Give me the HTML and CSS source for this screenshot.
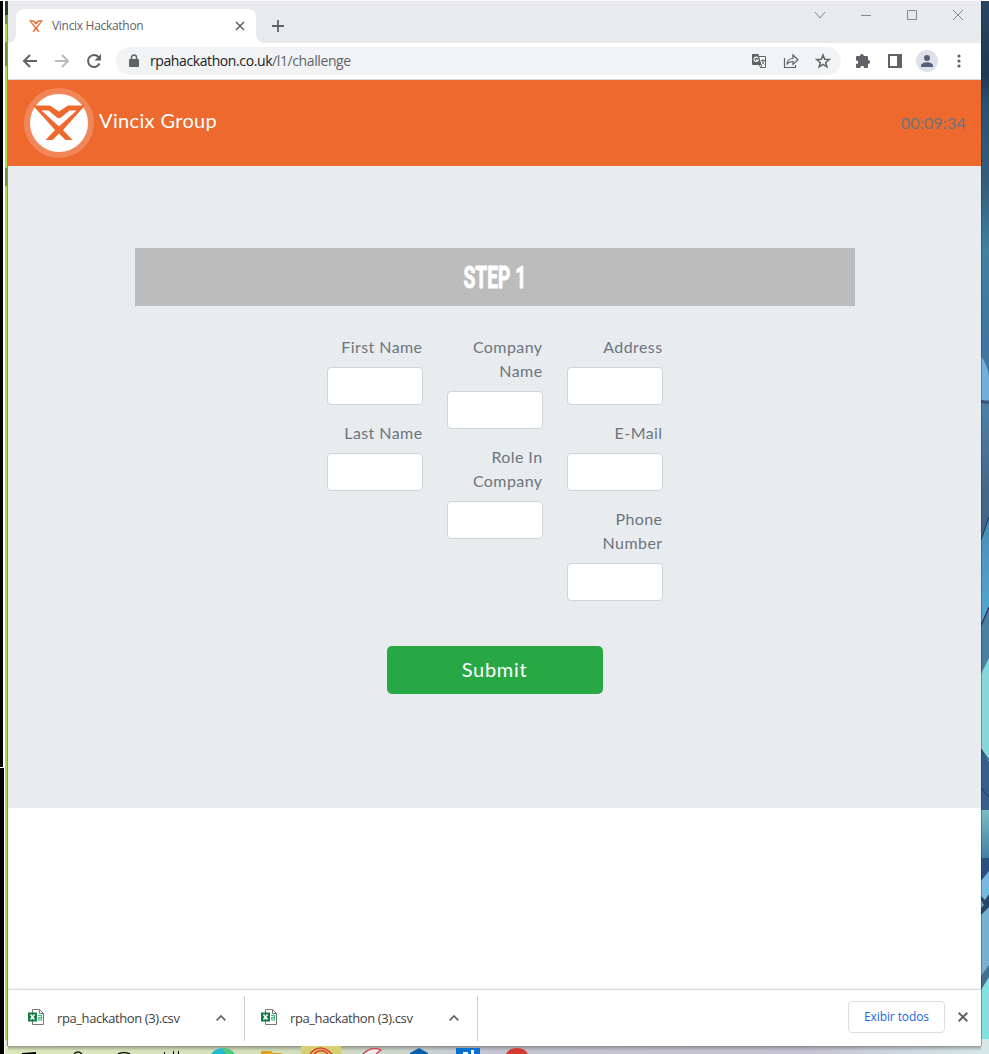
FILE: index.html
```html
<!DOCTYPE html>
<html lang="en">
<head>
<meta charset="utf-8">
<title>Vincix Hackathon</title>
<link rel="stylesheet" href="styles.css">
</head>
<body>
<svg width="0" height="0" class="defs">
  <defs>
    <symbol id="vincix" viewBox="0 0 52 36">
      <path d="M0 .5H17L26 6.500 35 .5H52L30 25 39.500 35H32.500L26 28.500 19.500 35H12.500L22 25Z" class="mark"/>
      <path d="M8.500 5.500H15.500L24 12.500Q26 14 28 12.500L36.500 5.500H43.500L26 21.500Z" class="cut"/>
    </symbol>
    <symbol id="csv" viewBox="0 0 16 16">
      <path d="M4.500.5h7l4 4v11h-11z" fill="#fff" stroke="#777"/>
      <path d="M11.500.5v4h4" fill="none" stroke="#777"/>
      <path d="M0 3.500h9v9H0z" fill="#107c41"/>
      <path d="M2.500 5.500l4 5M6.500 5.500l-4 5" stroke="#fff" stroke-width="1.500"/>
      <path d="M10 6.500h3.500V11H10.800V8.600h2.500" fill="none" stroke="#33c481" stroke-width="1.200"/>
    </symbol>
  </defs>
</svg>
<div class="desktop">
  <svg class="edge" width="8" height="1046" viewBox="0 0 8 1046">
    <path fill="#fff" d="M0 0h8v1046H0z"/>
    <path d="M0 1h3v766H0zM0 768h4v278H0z"/>
    <path fill="#abd94c" d="M5 1h3v1039H5z"/>
    <path fill="#273c25" d="M5 1h3v14H5z"/>
    <path fill="#6f9438" d="M5 15h3v9H5zM5 42h2v24H5zM5 168h2v18H5z"/>
    <path fill="#dcebb5" d="M5 1040h3v6H5z"/>
    <path fill="#83a044" d="M7 15h1v1031H7z"/>
  </svg>
  <div class="window">
    <div class="tabstrip">
      <div class="tab">
        <svg width="14" height="12" viewBox="0 0 52 36" preserveAspectRatio="none"><use href="#vincix" width="52" height="36"/></svg>
        <span class="tab-title">Vincix Hackathon</span>
        <svg width="10" height="10" viewBox="0 0 10 10" class="line"><path d="M1 1l8 8M9 1L1 9" stroke-width="1.600"/></svg>
      </div>
      <svg class="plus line" width="12" height="12" viewBox="0 0 12 12"><path d="M6 0v12M0 6h12" stroke-width="1.800"/></svg>
      <div class="controls">
        <svg width="12" height="12" viewBox="0 0 12 12"><path d="M1 3l5 6 5-6"/></svg>
        <svg width="12" height="12" viewBox="0 0 12 12"><path d="M1 6.500h10"/></svg>
        <svg width="12" height="12" viewBox="0 0 12 12"><path d="M1.500 1.500h9v9h-9z"/></svg>
        <svg width="12" height="12" viewBox="0 0 12 12"><path d="M1 1l10 10M11 1L1 11"/></svg>
      </div>
    </div>
    <div class="toolbar">
      <div class="cells nav">
        <span><svg width="16" height="16" viewBox="0 0 16 16" class="line"><path d="M15 8H2M8 2L2 8l6 6" stroke-width="2"/></svg></span>
        <span><svg width="16" height="16" viewBox="0 0 16 16" class="line faded"><path d="M1 8h13M8 2l6 6-6 6" stroke-width="2"/></svg></span>
        <span><svg width="16" height="16" viewBox="0 0 16 16" class="line"><path d="M13.500 10.500A6 6 0 1 1 12.500 4" stroke-width="2"/><path class="solid" d="M15 1v6.500H8.500z"/></svg></span>
      </div>
      <div class="omnibox">
        <svg class="lock" width="10" height="14" viewBox="0 0 10 14"><path fill="#5f6368" d="M1 5h8a1 1 0 0 1 1 1v6a1 1 0 0 1-1 1H1a1 1 0 0 1-1-1V6a1 1 0 0 1 1-1z"/><path d="M2.500 5V3.500a2.500 2.500 0 0 1 5 0V5" fill="none" stroke="#5f6368" stroke-width="1.500"/></svg>
        <span class="url"><b>rpahackathon.co.uk</b>/l1/challenge</span>
        <div class="cells">
          <span><svg width="16" height="16" viewBox="0 0 16 16"><path d="M7.500 3.500h7v11H9" fill="#fff" stroke="#5f6368"/><path fill="#5f6368" d="M1 1h6.500l3 11H2a1 1 0 0 1-1-1z"/><path d="M7 5A2.200 2.200 0 1 0 7.300 7H5" fill="none" stroke="#fff" stroke-width="1.100"/><path d="M10 7.500h4M12 6v1.500M13.500 7.500c-.5 2-2 3.500-3 4M10.800 8c.7 2 2 3 2.700 3.500M8.500 12l1 2.500 1.500-2.500" fill="none" stroke="#5f6368" stroke-width=".9"/></svg></span>
          <span><svg width="16" height="16" viewBox="0 0 16 16" class="line"><path d="M1.500 5v9.500h11V12M4 11.500c.3-4 2.500-6 6-6v-3.500l5 4.700-5 4.700V8.500C7.200 8.500 5.300 9.400 4 11.500z" stroke-width="1.200"/></svg></span>
          <span><svg width="16" height="16" viewBox="0 0 16 16" class="line"><path d="M8 2l1.700 4.200 4.500.3-3.500 2.900 1.200 4.400L8 11.400l-3.900 2.400 1.200-4.400L1.800 6.500l4.500-.3z" stroke-width="1.500"/></svg></span>
        </div>
      </div>
      <div class="cells">
        <span><svg width="16" height="16" viewBox="0 0 16 16"><path fill="#5f6368" d="M1 4a1 1 0 0 1 1-1h3V2.800a1.900 1.900 0 0 1 3.800 0V3H12a1 1 0 0 1 1 1v3h.2a1.900 1.900 0 0 1 0 3.800H13V14a1 1 0 0 1-1 1H9v-.5a1.800 1.800 0 0 0-3.600 0v.5H2a1 1 0 0 1-1-1v-3h.5a1.800 1.800 0 0 0 0-3.600H1z"/></svg></span>
        <span><svg width="14" height="14" viewBox="0 0 14 14"><path fill="#5f6368" fill-rule="evenodd" d="M0 0h14v14H0zM2 2v10h7V2z"/></svg></span>
        <span><svg width="22" height="22" viewBox="0 0 22 22"><circle cx="11" cy="11" r="11" fill="#dee1e6"/><circle cx="11" cy="8" r="3" fill="#56617a"/><path fill="#56617a" d="M5 17v-1.500c0-2 3-3.300 6-3.300s6 1.300 6 3.300V17z"/></svg></span>
        <span><svg width="4" height="14" viewBox="0 0 4 14" fill="#5f6368"><circle cx="2" cy="2" r="1.600"/><circle cx="2" cy="7" r="1.600"/><circle cx="2" cy="12" r="1.600"/></svg></span>
      </div>
    </div>
    <header class="brandbar">
      <div class="logo"><svg width="52" height="36" viewBox="0 0 52 36"><use href="#vincix" width="52" height="36"/></svg></div>
      <span class="brand">Vincix Group</span>
      <span class="timer">00:09:34</span>
    </header>
    <main class="challenge">
      <h1 class="step"><span>STEP 1</span></h1>
      <form class="fields">
        <div class="column">
          <label>First Name<input type="text"></label>
          <label>Last Name<input type="text"></label>
        </div>
        <div class="column">
          <label>Company Name<input type="text"></label>
          <label>Role In Company<input type="text"></label>
        </div>
        <div class="column">
          <label>Address<input type="text"></label>
          <label>E-Mail<input type="text"></label>
          <label>Phone Number<input type="text"></label>
        </div>
      </form>
      <button class="submit" type="button">Submit</button>
    </main>
    <div class="blank"></div>
    <footer class="downloads">
      <div class="download"><svg width="16" height="16"><use href="#csv"/></svg><span>rpa_hackathon (3).csv</span><svg class="line" width="10" height="6" viewBox="0 0 10 6"><path d="M.7 5.300L5 1l4.300 4.300" stroke-width="1.700"/></svg></div>
      <div class="download"><svg width="16" height="16"><use href="#csv"/></svg><span>rpa_hackathon (3).csv</span><svg class="line" width="10" height="6" viewBox="0 0 10 6"><path d="M.7 5.300L5 1l4.300 4.300" stroke-width="1.700"/></svg></div>
      <button class="show-all" type="button">Exibir todos</button>
      <svg class="line dismiss" width="10" height="10" viewBox="0 0 10 10"><path d="M.7.7l8.600 8.600M9.300.7L.7 9.300" stroke-width="2"/></svg>
    </footer>
  </div>
  <svg class="edge" width="8" height="1046" viewBox="0 0 8 1046">
    <defs>
      <linearGradient id="sky" x1="0" y1="0" x2="0" y2="1">
        <stop offset="0" stop-color="#294763"/><stop offset=".07" stop-color="#203751"/><stop offset=".1" stop-color="#2b5272"/>
        <stop offset=".18" stop-color="#345f80"/><stop offset=".24" stop-color="#4381a0"/><stop offset=".33" stop-color="#4074a0"/>
        <stop offset=".39" stop-color="#4d80a5"/><stop offset=".47" stop-color="#45668a"/><stop offset="1" stop-color="#436b90"/>
      </linearGradient>
      <linearGradient id="blade" x1="0" y1="0" x2="0" y2="1"><stop offset="0" stop-color="#4c8bb8"/><stop offset="1" stop-color="#55a8d3"/></linearGradient>
      <linearGradient id="teal" x1="0" y1="0" x2="0" y2="1"><stop offset="0" stop-color="#79bdc6"/><stop offset="1" stop-color="#3e82a4"/></linearGradient>
    </defs>
    <path fill="url(#sky)" d="M0 0h8v1046H0z"/>
    <path fill="#70b0da" d="M0 356q6 8 8 20v24H0z"/>
    <path fill="#355574" d="M0 400l8 2v2l-8-1z"/>
    <path fill="url(#blade)" d="M8 517v90L0 625v-87z"/>
    <path d="M8 517L0 540M8 607L0 625" stroke="#192d45"/>
    <path fill="#4b7f9f" d="M8 611v55L0 676v-48z"/>
    <path fill="#87d6d9" d="M8 658v104L0 749v-75z"/>
    <path fill="#355f8b" d="M0 749l8 13v48H0z"/>
    <path d="M0 749l8 11M0 788l8 9" stroke="#1a385c"/>
    <path fill="url(#teal)" d="M0 810h8v48H0z"/>
    <path fill="#294f83" d="M0 858h8v15l-8 7z"/>
    <path fill="#76bae3" d="M8 871v30l-8 3v-23z"/>
    <path fill="#76b1d0" d="M0 904h8v65l-8 9z"/>
    <path fill="#274766" d="M0 896l4 4 4-6v13l-8 8v-7l3-3-3-5z"/>
    <path fill="#406f90" d="M8 965v13l-8 12v-14z"/>
    <path fill="#84dfe1" d="M8 977v62H0v-49z"/>
    <path fill="#d4e6e8" d="M0 1039h8v7H0z"/>
    <path fill="#122333" opacity=".35" d="M0 0h1v1046H0z"/>
    <path fill="#fff" d="M0 0h8v1H0z"/>
  </svg>
  <svg class="taskbar" width="989" height="8" viewBox="0 0 989 8">
    <defs><linearGradient id="bar" x1="0" x2="1" y1="0" y2="0"><stop offset="0" stop-color="#dce9bb"/><stop offset=".3" stop-color="#d3dfba"/><stop offset=".42" stop-color="#cad4d1"/><stop offset=".5" stop-color="#c5c5d2"/><stop offset=".82" stop-color="#c6c4d3"/><stop offset="1" stop-color="#d5e8e9"/></linearGradient>
    <linearGradient id="shade" x1="0" x2="0" y1="0" y2="1"><stop offset="0" stop-color="#555" stop-opacity=".55"/><stop offset="1" stop-color="#777" stop-opacity="0"/></linearGradient></defs>
    <path fill="url(#bar)" d="M0 0h989v8H0z"/>
    <path fill="url(#shade)" d="M8 0h973v5H8z"/>
    <path d="M0 0h4v8H0z"/><path fill="#fff" d="M4 0h1v8H4z"/>
    <path d="M22 7l14-1v2H22zM164 6h1v2h-1zM173 5h1v3h-1zM178 5h1v3h-1z"/>
    <path d="M74 8q4-4 8 0M118 8q6-3 12 0" fill="none" stroke="#171b17" stroke-width="1.500"/>
    <path fill="#25b9cd" d="M211 8q4-6 12-6t12 6z"/><path fill="#56c873" d="M222 2q9 0 12 6h-8z"/>
    <path fill="#e0a11c" d="M261 5h10l2 2h9v1h-21z"/>
    <path fill="#d8cf73" d="M301 0h40v8h-40z"/>
    <path d="M310 8q10-12 22 0M314 8q7-7 14 0" fill="none" stroke="#dd4030" stroke-width="1.500"/>
    <path d="M363 8q8-8 18-4l-5 4" fill="#eee" stroke="#d63845" stroke-width="1.200"/>
    <path fill="#0862aa" d="M410 7l9-5 9 5v1h-18z"/><path fill="#0870cf" d="M456 2h24v6h-24z"/><path fill="#fff" d="M463 6h5v2h-5zM471 4h3v4h-3z"/>
    <path fill="#d6392d" d="M506 8q3-6 11-6t11 6z"/>
  </svg>
</div>
</body>
</html>
```

FILE: styles.css
```css
* { box-sizing: border-box; }
body { margin: 0; overflow: hidden; font-family: Lato, sans-serif; }
svg { display: block; flex: none; }
.defs { position: absolute; }
.desktop { display: grid; grid-template-columns: 8px 973px 8px; grid-template-rows: 1046px 8px; width: 989px; height: 1054px; }
.taskbar { grid-column: 1 / -1; }
.window { display: flex; flex-direction: column; border-top: 1px solid #f7f8f7; background: #fff; }
.mark { fill: #ed692d; }
.cut { fill: #fff; }
.line { fill: none; stroke: #5f6368; }
.line .solid { fill: #5f6368; stroke: none; }
.faded { stroke: #b9bbbe; }

.tabstrip { display: flex; align-items: flex-start; height: 42px; padding: 8px 0 0 8px; background: #e8eaed; }
.tab { position: relative; display: flex; align-items: center; width: 240px; height: 34px; padding: 0 11px 0 13px; border-radius: 8px 8px 0 0; background: #fff; }
.tab::before, .tab::after { content: ""; position: absolute; bottom: 0; width: 8px; height: 8px; }
.tab::before { left: -8px; background: radial-gradient(circle at 0 0, transparent 7.5px, #fff 8px); }
.tab::after { right: -8px; background: radial-gradient(circle at 100% 0, transparent 7.5px, #fff 8px); }
.tab-title { flex: 1; margin-left: 9px; font: 12px/16px "Open Sans", sans-serif; letter-spacing: -.3px; color: #5f6368; }
.plus { margin: 11px 0 0 16px; }
.controls { display: flex; gap: 34px; margin: 0 17px 0 auto; fill: none; stroke: #858789; }

.toolbar { display: flex; align-items: center; height: 37px; padding: 0 6px; border-bottom: 1px solid #d8d9dc; }
.cells { display: flex; }
.cells span { display: grid; place-items: center; width: 32px; height: 28px; }
.omnibox { display: flex; flex: 1; align-items: center; height: 28px; margin: 0 6px; padding: 0 2px 0 13px; border-radius: 14px; background: #f1f3f4; }
.lock { margin-bottom: 1px; }
.url { flex: 1; margin-left: 11px; font: 14px/20px "Open Sans", sans-serif; letter-spacing: -.4px; color: #5f6368; }
.url b { font-weight: 400; color: #202124; }

.brandbar { display: flex; align-items: center; height: 86px; padding: 0 15px 0 16px; background: #ed692d; }
.logo { display: grid; place-items: center; width: 70px; height: 70px; border: 6px solid #f18658; border-radius: 50%; background: #fff; }
.brand { margin: 0 auto 6px 5px; font-size: 20px; line-height: 30px; letter-spacing: .35px; color: #fff; }
.timer { font-size: 16px; line-height: 24px; letter-spacing: .2px; color: #6c757d; }

.challenge { display: flex; flex-direction: column; align-items: center; height: 642px; padding-top: 82px; background: #e8ecef; }
.step { display: grid; place-items: center; width: 720px; height: 58px; margin: 0 0 29px; background: #bcbcbc; color: #fff; font: 700 32px/38px Roboto, sans-serif; }
.step span { padding-left: 2px; transform: scaleX(.6); -webkit-text-stroke: 1px #fff; }
.fields { display: flex; gap: 24px; height: 311px; }
.column { width: 96px; }
.column label { display: block; margin-bottom: 16px; font-size: 16px; line-height: 24px; letter-spacing: .42px; text-align: right; color: #6c757d; }
.column input { display: block; width: 96px; height: 38px; margin-top: 8px; border: 1px solid #ced4da; border-radius: 4px; background: #fff; }
.submit { width: 216px; height: 48px; padding: 0 0 2px; border: 0; border-radius: 5px; background: #28a745; color: #fff; font: 20px/30px Lato, sans-serif; letter-spacing: .7px; }
.blank { height: 181px; }

.downloads { display: flex; align-items: center; height: 57px; border-top: 1px solid #dadce0; padding-right: 13px; box-shadow: 1px 1px 2px #777; }
.download { display: flex; align-items: center; width: 233px; height: 45px; padding: 0 18px 0 16px; border-right: 1px solid #cfd0d2; font: 13px/20px "Open Sans", sans-serif; color: #3c4043; }
.download:first-child { width: 237px; padding-left: 20px; }
.download > svg:first-child { margin-bottom: 2px; }
.download span { flex: 1; margin-left: 13px; letter-spacing: -.4px; }
.show-all { width: 97px; height: 32px; margin: 0 13px 2px auto; padding: 0; border: 1px solid #dadce0; border-radius: 4px; background: #fff; color: #1a67e8; font: 12px/18px "Open Sans", sans-serif; letter-spacing: -.1px; }
.dismiss { margin-bottom: 2px; }
```
